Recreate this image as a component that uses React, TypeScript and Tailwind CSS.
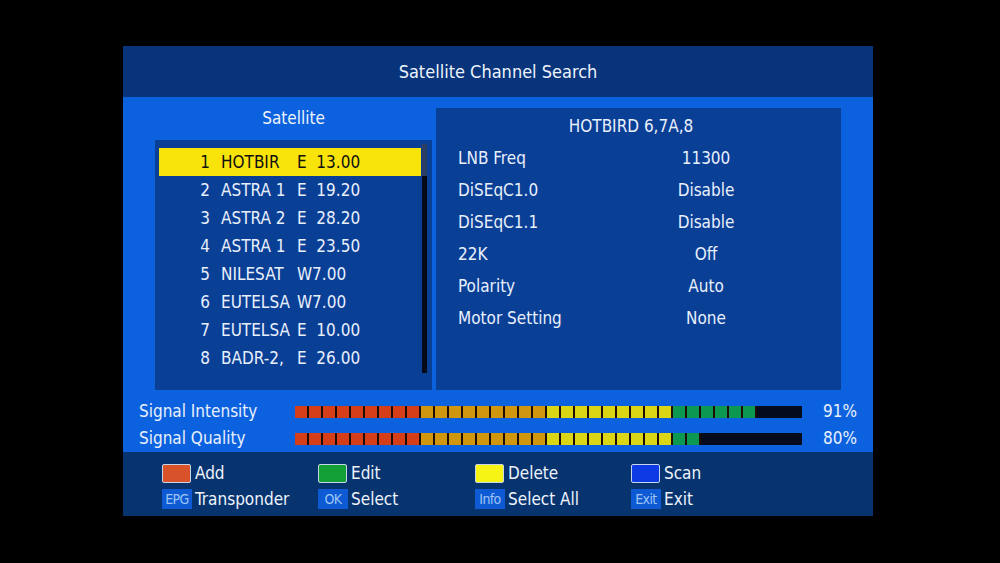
import React from "react";

const FONT = { fontFamily: '"DejaVu Sans Condensed", "DejaVu Sans", Tahoma, sans-serif', fontStretch: "semi-condensed" as const };

const satellites = [
  { n: 1, name: "HOTBIR", dir: "E  13.00" },
  { n: 2, name: "ASTRA 1", dir: "E  19.20" },
  { n: 3, name: "ASTRA 2", dir: "E  28.20" },
  { n: 4, name: "ASTRA 1", dir: "E  23.50" },
  { n: 5, name: "NILESAT", dir: "W7.00" },
  { n: 6, name: "EUTELSA", dir: "W7.00" },
  { n: 7, name: "EUTELSA", dir: "E  10.00" },
  { n: 8, name: "BADR-2,", dir: "E  26.00" },
];

const settings = [
  ["LNB Freq", "11300"],
  ["DiSEqC1.0", "Disable"],
  ["DiSEqC1.1", "Disable"],
  ["22K", "Off"],
  ["Polarity", "Auto"],
  ["Motor Setting", "None"],
];

function segColor(i: number) {
  if (i < 9) return "bg-[#d63e1a]";
  if (i < 18) return "bg-[#d0960e]";
  if (i < 27) return "bg-[#dad616]";
  return "bg-[#0c9850]";
}

function SignalBar({ lit }: { lit: number }) {
  return (
    <div className="flex h-[12px] w-[507px] bg-[#040b1c]">
      {Array.from({ length: lit }).map((_, i) => (
        <div
          key={i}
          className={`h-full w-[14px] shrink-0 border-r-[2px] border-[#1e0e06] ${segColor(i)}`}
        />
      ))}
    </div>
  );
}

function SignalRow({ label, lit, pct }: { label: string; lit: number; pct: string }) {
  return (
    <div className="flex h-[27px] items-center">
      <div className="w-[172px] pl-[16px] text-[17px] text-[#e8f0fc]">{label}</div>
      <SignalBar lit={lit} />
      <div className="w-[71px] pr-[16px] text-right text-[17px] text-[#e8f0fc]">{pct}</div>
    </div>
  );
}

function ColorKey({ color, label }: { color: string; label: string }) {
  return (
    <div className="flex items-center gap-[4px]">
      <div className={`h-[19px] w-[29px] rounded-[2px] border border-[#c8d4e8] ${color}`} />
      <span>{label}</span>
    </div>
  );
}

function KeyBadge({ tag, label }: { tag: string; label: string }) {
  return (
    <div className="flex items-center gap-[3px]">
      <div className="flex h-[20px] w-[30px] items-center justify-center bg-[#0d5ad4] text-[14px] tracking-[-0.6px] text-[#9cc4f4]">
        {tag}
      </div>
      <span>{label}</span>
    </div>
  );
}

export default function App() {
  return (
    <div className="h-[563px] w-[1000px] bg-black pl-[123px] pt-[46px]" style={FONT}>
      <div className="flex h-[470px] w-[750px] flex-col">
        {/* title bar */}
        <div className="flex h-[51px] items-center justify-center bg-[#07347a] text-[18px] text-[#eef3fc]">
          Satellite Channel Search
        </div>

        {/* body */}
        <div className="flex h-[355px] flex-col bg-[#0c62de]">
          <div className="flex gap-[4px] pl-[32px] pt-[11px]">
            {/* satellite list */}
            <div className="flex w-[277px] flex-col">
              <div className="h-[32px] text-center text-[17px] leading-[20px] text-[#eef3fc]">
                Satellite
              </div>
              <div className="relative h-[250px] bg-[#0a3f96] pl-[4px] pt-[8px]">
                {satellites.map((s, i) => (
                  <div
                    key={s.n}
                    className={`flex h-[28px] w-[262px] items-center pt-[1px] text-[17px] ${
                      i === 0 ? "bg-[#f8e40a] text-[#101010]" : "text-[#e8f0fc]"
                    }`}
                  >
                    <span className="w-[52px] pr-[1px] text-right">{s.n}</span>
                    <span className="ml-[10px] w-[76px] whitespace-nowrap">{s.name}</span>
                    <span className="whitespace-pre">{s.dir}</span>
                  </div>
                ))}
                {/* scroll bar */}
                <div className="absolute left-[267px] top-[4px] flex h-[229px] w-[5px] flex-col bg-[#040a18]">
                  <div className="h-[32px] w-full bg-[#2a3e66]" />
                </div>
              </div>
            </div>

            {/* satellite detail */}
            <div className="h-[282px] w-[405px] bg-[#0a3f96] text-[17px] text-[#e8f0fc]">
              <div className="h-[34px] pr-[15px] pt-[8px] text-center leading-[20px]">HOTBIRD 6,7A,8</div>
              {settings.map(([k, v]) => (
                <div key={k} className="flex h-[32px] items-center pl-[22px] pt-[1px]">
                  <span className="w-[178px]">{k}</span>
                  <span className="w-[140px] text-center">{v}</span>
                </div>
              ))}
            </div>
          </div>

          <div className="mt-[8px] flex flex-col">
            <SignalRow label="Signal Intensity" lit={33} pct="91%" />
            <SignalRow label="Signal Quality" lit={29} pct="80%" />
          </div>
        </div>

        {/* key legend */}
        <div className="flex h-[64px] flex-col gap-[6px] bg-[#07336f] pl-[39px] pt-[11px] text-[17px] leading-[20px] text-[#eef3fc]">
          <div className="grid grid-cols-[156px_157px_156px_120px]">
            <ColorKey color="bg-[#d8522a]" label="Add" />
            <ColorKey color="bg-[#12a036]" label="Edit" />
            <ColorKey color="bg-[#f6f414]" label="Delete" />
            <ColorKey color="bg-[#0e3ae6]" label="Scan" />
          </div>
          <div className="grid grid-cols-[156px_157px_156px_120px]">
            <KeyBadge tag="EPG" label="Transponder" />
            <KeyBadge tag="OK" label="Select" />
            <KeyBadge tag="Info" label="Select All" />
            <KeyBadge tag="Exit" label="Exit" />
          </div>
        </div>
      </div>
    </div>
  );
}
